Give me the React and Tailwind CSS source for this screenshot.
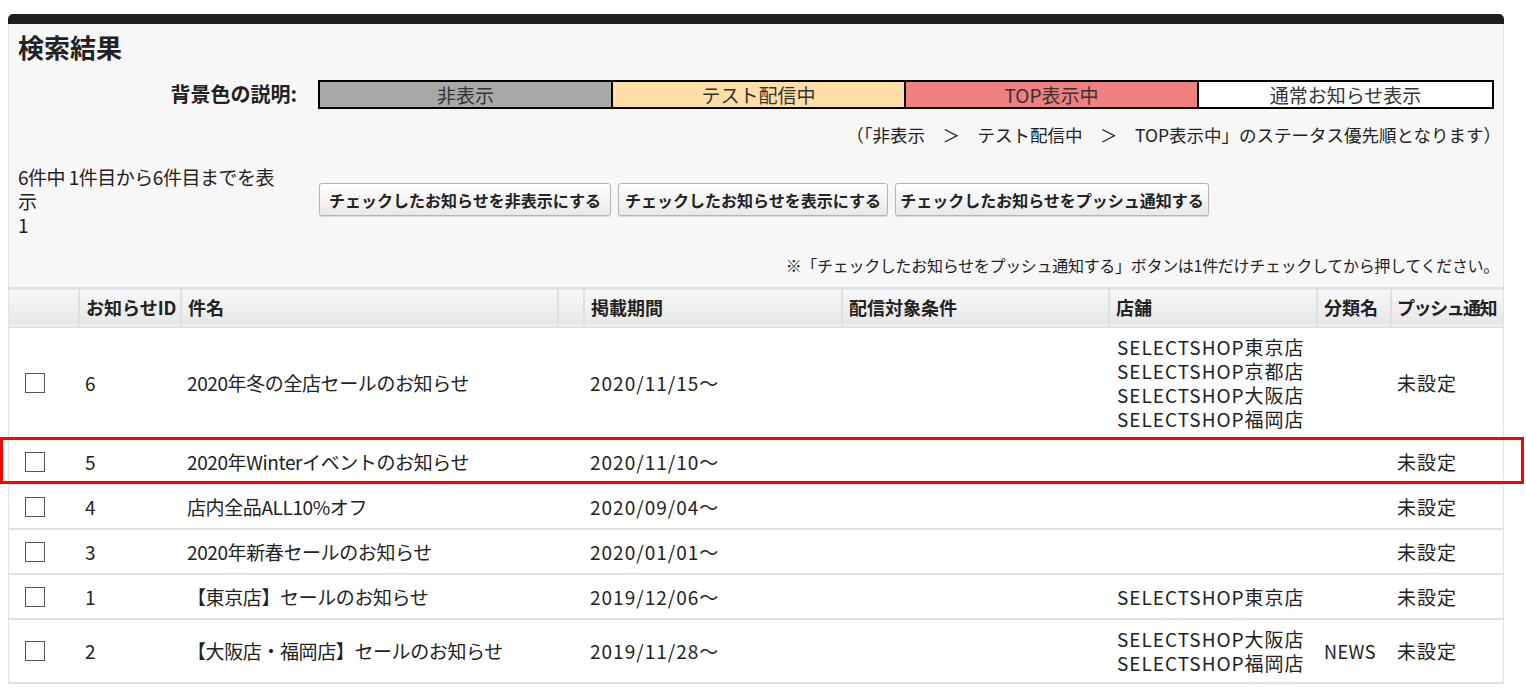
import React from "react";

const rows = [
  { id: "6", title: "2020年冬の全店セールのお知らせ", date: "2020/11/15〜", shops: ["SELECTSHOP東京店", "SELECTSHOP京都店", "SELECTSHOP大阪店", "SELECTSHOP福岡店"], cat: "", push: "未設定" },
  { id: "5", title: "2020年Winterイベントのお知らせ", date: "2020/11/10〜", shops: [], cat: "", push: "未設定" },
  { id: "4", title: "店内全品ALL10%オフ", date: "2020/09/04〜", shops: [], cat: "", push: "未設定" },
  { id: "3", title: "2020年新春セールのお知らせ", date: "2020/01/01〜", shops: [], cat: "", push: "未設定" },
  { id: "1", title: "【東京店】セールのお知らせ", date: "2019/12/06〜", shops: ["SELECTSHOP東京店"], cat: "", push: "未設定" },
  { id: "2", title: "【大阪店・福岡店】セールのお知らせ", date: "2019/11/28〜", shops: ["SELECTSHOP大阪店", "SELECTSHOP福岡店"], cat: "NEWS", push: "未設定" },
];

const headers = ["", "お知らせID", "件名", "", "掲載期間", "配信対象条件", "店舗", "分類名", "プッシュ通知"];

function Btn({ children, w }) {
  return (
    <button className={`h-[33px] ${w} rounded-[3px] border border-[#b5b5b5] bg-linear-to-b from-[#ffffff] to-[#e9e9e9] text-[16px] font-bold text-[#222] shadow-[0_1px_1px_rgba(0,0,0,0.15)] whitespace-nowrap`}>
      {children}
    </button>
  );
}

export default function App() {
  return (
    <div className="relative w-[1526px] h-[688px] overflow-hidden bg-white text-[#222]" style={{ fontFamily: "'Noto Sans CJK JP', 'Noto Sans', sans-serif" }}>
      <div className="ml-[8px] mt-[14px] w-[1496px]">
        <div className="h-[10px] rounded-t-[5px] bg-[#1e1e1e]" />
        <div className="bg-[#f7f7f7] border-x border-[#e2e2e2]">
          <div className="pl-[9px] pt-[6px] h-[44px] text-[26px] font-bold leading-[34px]">検索結果</div>
          <div className="flex items-center h-[40px] mt-[6px]">
            <div className="w-[288px] text-right text-[20px] font-bold">背景色の説明:</div>
            <div className="ml-[21px] w-[1176px] h-[29px] grid grid-cols-4 border-[2px] border-black text-[19px] leading-[25px] text-[#333]">
              <div className="bg-[#a9a9a9] text-center border-r-[2px] border-black">非表示</div>
              <div className="bg-[#ffdfa8] text-center border-r-[2px] border-black">テスト配信中</div>
              <div className="bg-[#f08080] text-center border-r-[2px] border-black">TOP表示中</div>
              <div className="bg-white text-center">通常お知らせ表示</div>
            </div>
          </div>
          <div className="text-right pr-[2px] mt-[9px] text-[17.5px] leading-[24px] whitespace-pre">（「非表示　＞　テスト配信中　＞　TOP表示中」のステータス優先順となります）</div>
          <div className="flex mt-[20px]">
            <div className="w-[310px] pl-[9px] -mt-[2px] text-[19px] leading-[24px] tracking-[-0.5px]">
              6件中 1件目から6件目までを表<br />示<br />1
            </div>
            <div className="flex gap-[7px] pt-[16px]">
              <Btn w="w-[292px]">チェックしたお知らせを非表示にする</Btn>
              <Btn w="w-[270px]">チェックしたお知らせを表示にする</Btn>
              <Btn w="w-[314px]">チェックしたお知らせをプッシュ通知する</Btn>
            </div>
          </div>
          <div className="text-right pr-[4px] mt-[16px] pb-[10px] text-[16px] leading-[24px] tracking-[-0.3px]">※「チェックしたお知らせをプッシュ通知する」ボタンは1件だけチェックしてから押してください。</div>
          <table className="w-[1494px] table-fixed border-collapse bg-white">
            <colgroup>
              <col className="w-[70px]" />
              <col className="w-[102px]" />
              <col className="w-[377px]" />
              <col className="w-[26px]" />
              <col className="w-[258px]" />
              <col className="w-[267px]" />
              <col className="w-[208px]" />
              <col className="w-[74px]" />
              <col className="w-[112px]" />
            </colgroup>
            <thead>
              <tr className="h-[39px] bg-linear-to-b from-[#f8f8f8] to-[#e7e7e7] border-t-[2px] border-b-[2px] border-[#dfe3e6]">
                {headers.map((h, i) => (
                  <th key={i} className={`text-left font-bold text-[18px] whitespace-nowrap ${i === 8 ? "pl-[5px] tracking-[-1.5px]" : "px-[6px]"} ${i > 0 ? "border-l-[2px] border-[#dde1e4]" : ""}`}>{h}</th>
                ))}
              </tr>
            </thead>
            <tbody className="text-[19px] leading-[24px]">
              {rows.map((r) => (
                <tr key={r.id} className="h-[45px] border-b-[2px] border-[#dfe3e6]">
                  <td className="pl-[16px]">
                    <div className="w-[20px] h-[20px] border-[1.5px] border-[#555] bg-white" />
                  </td>
                  <td className="px-[6px]">{r.id}</td>
                  <td className="px-[6px] whitespace-nowrap tracking-[-0.4px]">{r.title}</td>
                  <td />
                  <td className="px-[6px] tracking-[1px]">{r.date}</td>
                  <td />
                  <td className="px-[8px] py-[7px] whitespace-nowrap tracking-[1px]">
                    {r.shops.map((s) => (
                      <div key={s}>{s}</div>
                    ))}
                  </td>
                  <td className="px-[7px] text-[18px] tracking-[0.5px]">{r.cat}</td>
                  <td className="px-[6px] tracking-[1px]">{r.push}</td>
                </tr>
              ))}
            </tbody>
          </table>
        </div>
      </div>
      <div className="absolute left-[0px] top-[437px] w-[1524px] h-[47px] border-[3px] border-[#ff0000] pointer-events-none" />
    </div>
  );
}
